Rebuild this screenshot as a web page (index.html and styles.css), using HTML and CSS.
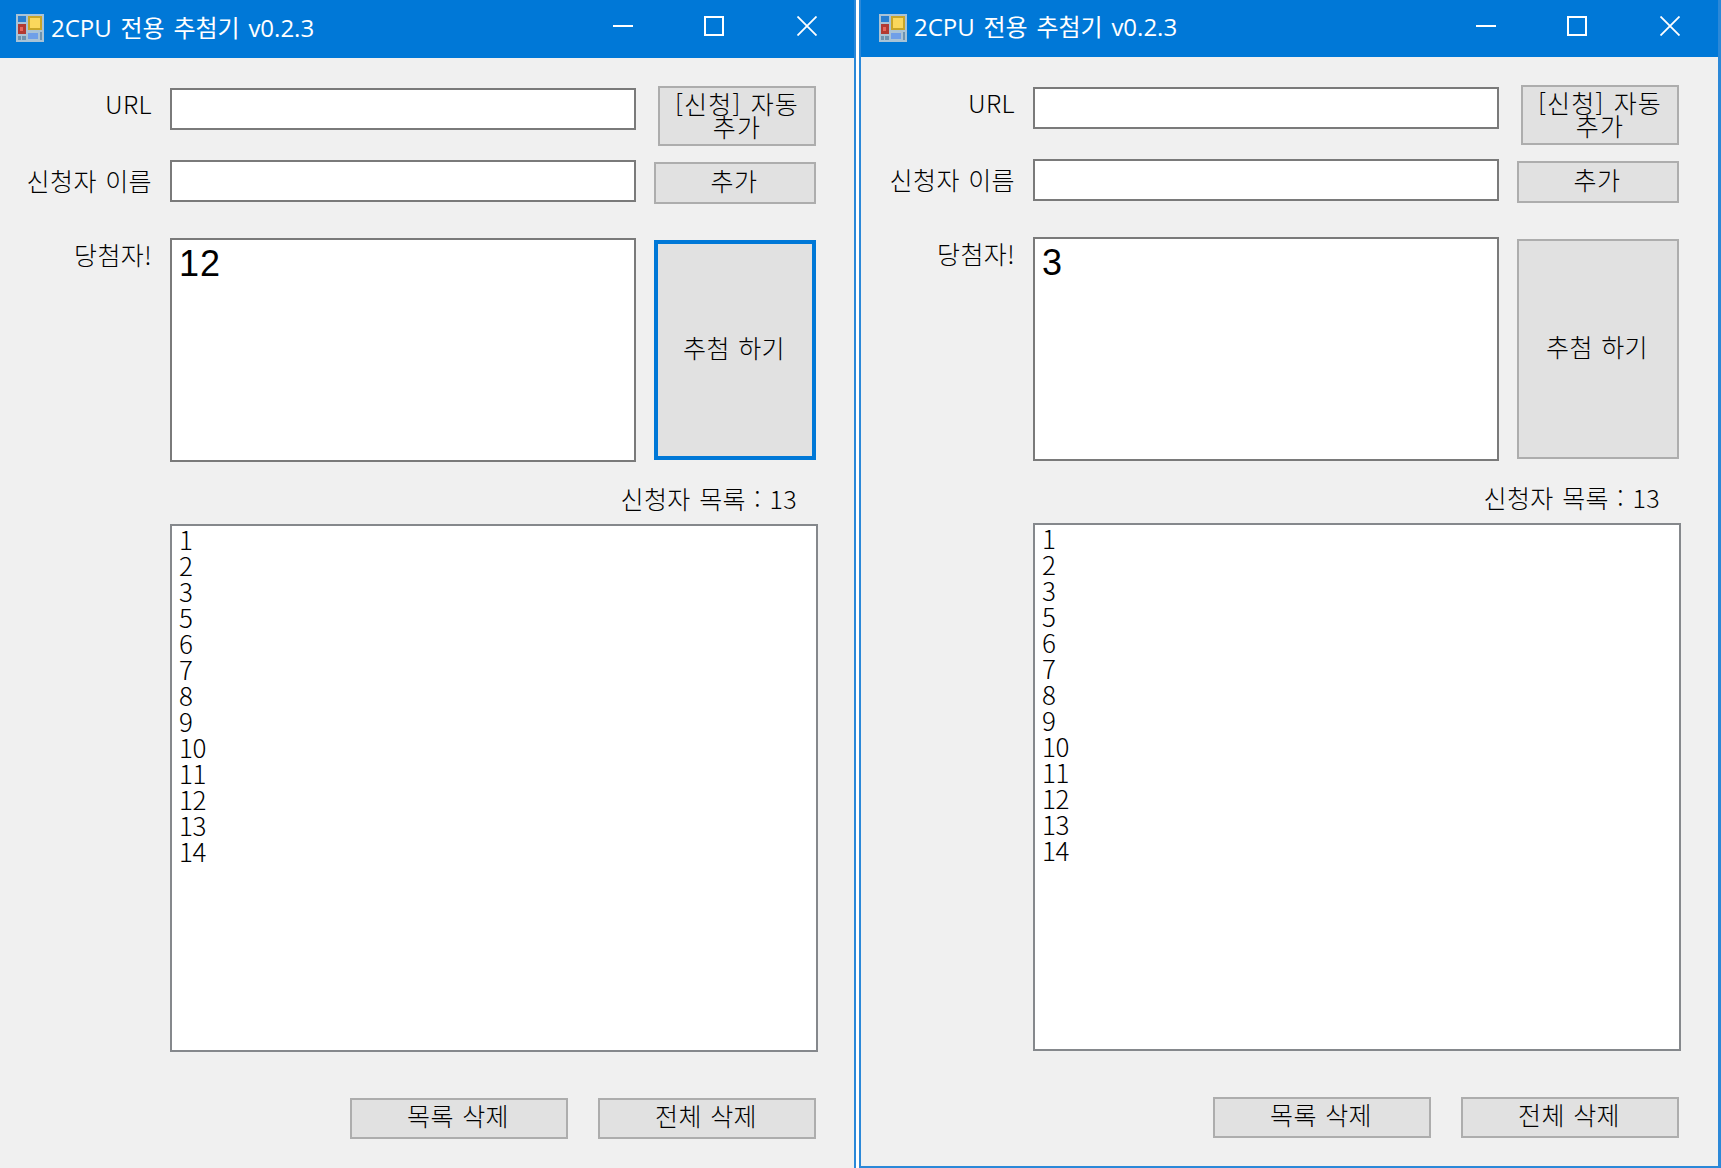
FILE: index.html
```html
<!DOCTYPE html>
<html lang="ko">
<head>
<meta charset="utf-8">
<title>2CPU 전용 추첨기 v0.2.3</title>
<link rel="stylesheet" href="styles.css">
</head>
<body>
<main class="desktop">
  <section class="win win-left">
    <header class="titlebar">
      <svg class="app-icon" viewBox="0 0 28 28"><rect width="28" height="28" fill="#a9c3d6"/><rect x="2" y="2" width="8" height="6" fill="#2a7fd0"/><rect x="12" y="2" width="14" height="14" fill="#c9a528"/><rect x="14" y="4" width="10" height="10" fill="#fbd75c"/><rect x="2" y="10" width="8" height="10" fill="#b23a32"/><rect x="4" y="13" width="3" height="4" fill="#e8675c"/><rect x="12" y="19" width="10" height="6" fill="#6f9fe8"/><rect x="2" y="22" width="3" height="4" fill="#6d93b0"/><rect x="6" y="22" width="4" height="4" fill="#6d93b0"/><rect x="24" y="18" width="2" height="8" fill="#6d93b0"/></svg>
      <h1 class="title">2CPU 전용 추첨기 v0.2.3</h1>
      <div class="controls">
        <svg class="ctl ctl-min" viewBox="0 0 20 20"><path d="M0 10h20" stroke="#fff" stroke-width="2" fill="none"/></svg>
        <svg class="ctl ctl-max" viewBox="0 0 20 20"><path d="M1 1h18v18H1z" stroke="#fff" stroke-width="2" fill="none"/></svg>
        <svg class="ctl" viewBox="0 0 20 20"><path d="M.5.5l19 19M19.500.5l-19 19" stroke="#fff" stroke-width="1.800" fill="none"/></svg>
      </div>
    </header>
    <div class="form">
      <div class="row row-url">
        <label class="label">URL</label>
        <input class="field" type="text">
        <button class="btn btn-auto">[신청] 자동<br>추가</button>
      </div>
      <div class="row row-name">
        <label class="label">신청자 이름</label>
        <input class="field field-name" type="text">
        <button class="btn btn-add">추가</button>
      </div>
      <div class="row row-winner">
        <label class="label">당첨자!</label>
        <div class="winner">12</div>
        <button class="btn btn-draw btn-focus">추첨 하기</button>
      </div>
      <div class="count">신청자 목록 : 13</div>
      <ul class="list"><li>1</li><li>2</li><li>3</li><li>5</li><li>6</li><li>7</li><li>8</li><li>9</li><li>10</li><li>11</li><li>12</li><li>13</li><li>14</li></ul>
      <div class="footer">
        <button class="btn btn-del">목록 삭제</button>
        <button class="btn btn-del">전체 삭제</button>
      </div>
    </div>
  </section>
  <section class="win win-right">
    <header class="titlebar">
      <svg class="app-icon" viewBox="0 0 28 28"><rect width="28" height="28" fill="#a9c3d6"/><rect x="2" y="2" width="8" height="6" fill="#2a7fd0"/><rect x="12" y="2" width="14" height="14" fill="#c9a528"/><rect x="14" y="4" width="10" height="10" fill="#fbd75c"/><rect x="2" y="10" width="8" height="10" fill="#b23a32"/><rect x="4" y="13" width="3" height="4" fill="#e8675c"/><rect x="12" y="19" width="10" height="6" fill="#6f9fe8"/><rect x="2" y="22" width="3" height="4" fill="#6d93b0"/><rect x="6" y="22" width="4" height="4" fill="#6d93b0"/><rect x="24" y="18" width="2" height="8" fill="#6d93b0"/></svg>
      <h1 class="title">2CPU 전용 추첨기 v0.2.3</h1>
      <div class="controls">
        <svg class="ctl ctl-min" viewBox="0 0 20 20"><path d="M0 10h20" stroke="#fff" stroke-width="2" fill="none"/></svg>
        <svg class="ctl ctl-max" viewBox="0 0 20 20"><path d="M1 1h18v18H1z" stroke="#fff" stroke-width="2" fill="none"/></svg>
        <svg class="ctl" viewBox="0 0 20 20"><path d="M.5.5l19 19M19.500.5l-19 19" stroke="#fff" stroke-width="1.800" fill="none"/></svg>
      </div>
    </header>
    <div class="form">
      <div class="row row-url">
        <label class="label">URL</label>
        <input class="field" type="text">
        <button class="btn btn-auto">[신청] 자동<br>추가</button>
      </div>
      <div class="row row-name">
        <label class="label">신청자 이름</label>
        <input class="field field-name" type="text">
        <button class="btn btn-add">추가</button>
      </div>
      <div class="row row-winner">
        <label class="label">당첨자!</label>
        <div class="winner">3</div>
        <button class="btn btn-draw">추첨 하기</button>
      </div>
      <div class="count">신청자 목록 : 13</div>
      <ul class="list"><li>1</li><li>2</li><li>3</li><li>5</li><li>6</li><li>7</li><li>8</li><li>9</li><li>10</li><li>11</li><li>12</li><li>13</li><li>14</li></ul>
      <div class="footer">
        <button class="btn btn-del">목록 삭제</button>
        <button class="btn btn-del">전체 삭제</button>
      </div>
    </div>
  </section>
</main>
</body>
</html>
```
FILE: styles.css
```css
* { box-sizing: border-box; }
html, body { margin: 0; height: 100%; background: #fff; }
body {
  overflow: hidden;
  font-family: "Noto Sans CJK KR", "Noto Sans", sans-serif;
  font-size: 25px;
  font-weight: 300;
  color: #000;
}
.desktop { display: flex; gap: 3px; width: 1721px; height: 1168px; }
.win { background: #f0f0f0; height: 1168px; }
.win-left { width: 856px; border-right: 2px solid #2b88d8; }
.win-right {
  width: 862px;
  border-left: 2px solid #2b88d8;
  border-right: 3px solid #2b88d8;
  border-bottom: 2px solid #2b88d8;
}
.titlebar {
  display: flex;
  align-items: center;
  height: 58px;
  padding: 0 37px 0 16px;
  background: #0078d7;
  color: #fff;
}
.win-right .titlebar { height: 57px; padding: 0 38px 0 18px; }
.app-icon { width: 28px; height: 28px; flex: none; margin-top: -2px; }
.title {
  margin: -6px 0 0 7px;
  flex: 1;
  font-family: "Open Sans", "Noto Sans CJK KR", sans-serif;
  font-size: 24px;
  font-weight: 400;
  word-spacing: 2.500px;
  white-space: nowrap;
}
.controls { display: flex; align-items: center; margin-top: -6px; }
.ctl { width: 20px; height: 20px; display: block; }
.ctl-min { margin-right: 71px; }
.ctl-max { margin-right: 73px; }
.form { width: 818px; padding-top: 28px; }
.win-right .form { margin-left: 2px; }
.row { display: flex; align-items: flex-start; width: 816px; }
.row-name { margin-top: 14px; }
.row-winner { margin-top: 34px; }
.label {
  width: 152px;
  margin-right: 18px;
  text-align: right;
  line-height: 34px;
  letter-spacing: .4px;
  word-spacing: 1px;
  white-space: nowrap;
}
.row-name .label { line-height: 40px; }
.row-winner .label { line-height: 32px; }
.field {
  width: 466px;
  height: 42px;
  margin: 2px 0 0;
  padding: 0;
  background: #fff;
  border: 2px solid #7a7a7a;
  border-radius: 0;
  outline: none;
}
.field-name { margin-top: 0; }
.winner {
  width: 466px;
  height: 224px;
  padding: 3px 0 0 7px;
  background: #fff;
  border: 2px solid #7a7a7a;
  font-family: "Liberation Sans", sans-serif;
  font-size: 36px;
  font-weight: 400;
  line-height: 42px;
  letter-spacing: 1px;
}
.btn {
  display: block;
  margin: 0 0 0 auto;
  padding: 0 2px 7px 0;
  background: #e1e1e1;
  border: 2px solid #adadad;
  border-radius: 0;
  color: #000;
  font: inherit;
  letter-spacing: .4px;
  word-spacing: 1px;
  line-height: 24px;
}
.btn-auto {
  width: 158px;
  height: 60px;
  padding: 0 0 3px;
  letter-spacing: 1.200px;
  line-height: 23px;
}
.btn-add { width: 162px; height: 42px; margin-top: 2px; }
.btn-draw { width: 162px; height: 220px; margin-top: 2px; }
.btn-focus { border: 4px solid #0078d7; }
.count {
  width: 797px;
  margin-top: 23px;
  text-align: right;
  line-height: 26px;
  letter-spacing: .4px;
  word-spacing: 1px;
}
.list {
  list-style: none;
  width: 648px;
  height: 528px;
  margin: 13px 0 0 170px;
  padding: 0 0 0 7px;
  background: #fff;
  border: 2px solid #85888c;
  font-size: 26px;
  line-height: 26px;
  letter-spacing: -.4px;
}
.footer { display: flex; justify-content: flex-end; gap: 30px; width: 816px; margin-top: 46px; }
.btn-del { width: 218px; height: 41px; margin: 0; }
```
